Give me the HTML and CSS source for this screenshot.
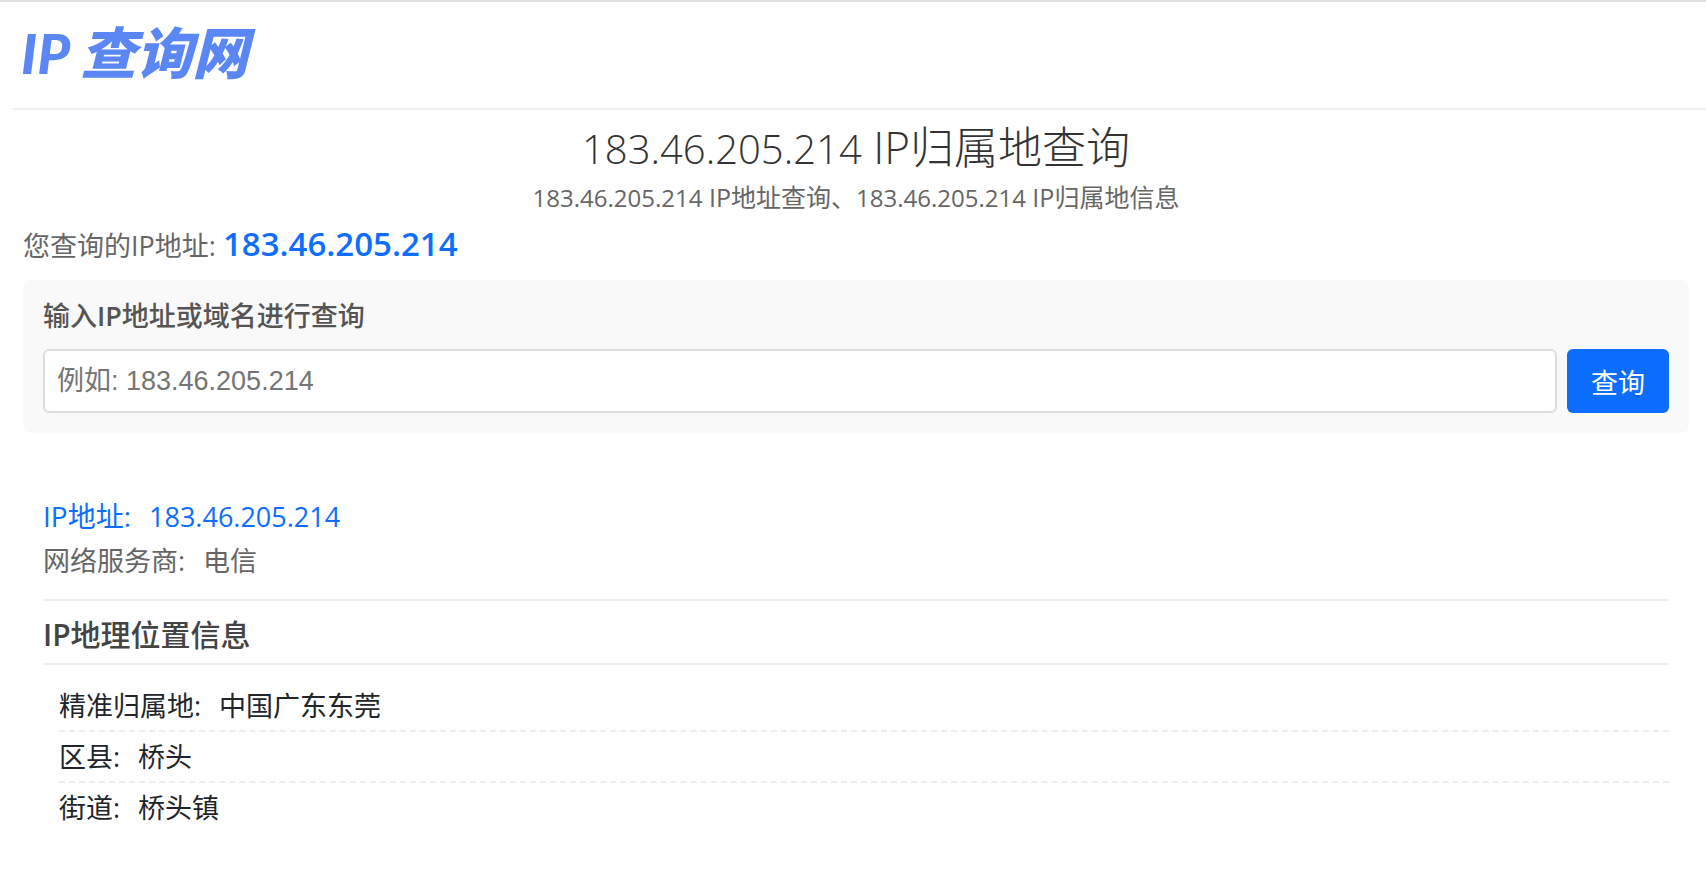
FILE: index.html
```
<!DOCTYPE html>
<html lang="zh-CN">
  <head>
    <meta charset="UTF-8" />
    <meta name="viewport" content="width=device-width, initial-scale=1.0" />
    <title>183.46.205.214 IP归属地查询</title>
    <link rel="stylesheet" href="styles.css">
  </head>
  <body>
    <header>
      <a class="logo" href="index.html"><span>IP</span>查询网</a>
    </header>

    <main class="container">
      <div class="title">
        <h1><span class="num">183.46.205.214</span> IP归属地查询</h1>
        <p><span class="num">183.46.205.214</span> IP地址查询、<span class="num">183.46.205.214</span> IP归属地信息</p>
      </div>

      <div class="current-ip">您查询的IP地址: <strong>183.46.205.214</strong></div>

      <form class="search">
        <label for="ip">输入<span class="latin">IP</span>地址或域名进行查询</label>
        <div class="search-row">
          <input type="text" id="ip" name="ip" placeholder="例如: 183.46.205.214" />
          <button type="submit">查询</button>
        </div>
      </form>

      <section class="result">
        <div class="result-ip"><span>IP地址:</span><span class="num">183.46.205.214</span></div>
        <div class="result-isp"><span>网络服务商:</span><span>电信</span></div>

        <h2><span class="latin">IP</span>地理位置信息</h2>
        <ul>
          <li><span>精准归属地:</span><span>中国广东东莞</span></li>
          <li><span>区县:</span><span>桥头</span></li>
          <li><span>街道:</span><span>桥头镇</span></li>
        </ul>
      </section>
    </main>
  </body>
</html>
```
FILE: styles.css
```
* {
  box-sizing: border-box;
}

body {
  font-family: "Open Sans", "Noto Sans CJK SC", sans-serif;
  font-size: 27px;
  line-height: 40px;
  margin: 0;
  color: #212529;
  background-color: #fff;
  border-top: 2px solid #e0e0e0;
}

header {
  height: 108px;
  margin-left: 13px;
  padding: 12px 8px;
  border-bottom: 2px solid #eee;
}

.logo {
  display: inline-flex;
  align-items: baseline;
  gap: 10px;
  color: #5b87f5;
  font-family: "Noto Sans CJK SC", sans-serif;
  font-size: 56px;
  font-weight: 900;
  font-style: italic;
  line-height: 72px;
  text-decoration: none;
}

.logo span {
  font-family: Lato, sans-serif;
}

.latin {
  font-weight: 600;
}

.container {
  padding: 0 17px 0 23px;
}

.title {
  text-align: center;
}

.title h1 {
  margin: 0;
  padding-top: 9px;
  color: #333;
  font-size: 44px;
  font-weight: 300;
  line-height: 56px;
}

.title h1 .num {
  font-size: 40px;
}

.title p {
  margin: 0;
  color: #666;
  font-size: 25px;
}

.title p .num {
  font-size: 24px;
}

.current-ip {
  margin-top: 2px;
  color: #666;
  line-height: 48px;
}

.current-ip strong {
  color: #0d6efd;
  font-size: 33px;
  font-weight: 600;
}

.search {
  margin-top: 10px;
  padding: 16px 20px 20px;
  background-color: #f9f9f9;
  border-radius: 8px;
}

.search label {
  display: block;
  margin-bottom: 13px;
  color: #555;
  font-weight: 500;
}

.search-row {
  display: flex;
  gap: 10px;
}

.search input {
  flex: 1;
  height: 64px;
  min-width: 0;
  padding: 0 12px;
  font-family: "Liberation Sans", "Noto Sans CJK SC", sans-serif;
  font-size: 27px;
  border: 2px solid #ddd;
  border-radius: 6px;
}

.search input::placeholder {
  color: #757575;
}

.search button {
  padding: 0 24px;
  color: #fff;
  background-color: #0d6efd;
  font-family: inherit;
  font-size: 27px;
  border: none;
  border-radius: 6px;
  cursor: pointer;
}

.search button:hover {
  background-color: #0b5ed7;
}

.result {
  padding: 59px 20px 0;
}

.result div,
.result li {
  display: flex;
  align-items: baseline;
  gap: 18px;
}

.result-ip {
  color: #0d6efd;
  font-size: 28px;
  line-height: 48px;
}

.result-ip .num {
  font-size: 27px;
}

.result-isp {
  padding-bottom: 18px;
  color: #666;
  border-bottom: 2px solid #eee;
}

.result h2 {
  margin: 0;
  padding: 14px 0 8px;
  color: #444;
  font-size: 30px;
  font-weight: 500;
  line-height: 40px;
  border-bottom: 2px solid #eee;
}

.result ul {
  list-style-type: none;
  margin: 0;
  padding: 16px 0 0 16px;
}

.result li {
  padding: 5px 0 4px;
  border-bottom: 2px dashed #eee;
}

.result li:last-child {
  border-bottom: none;
}
```
